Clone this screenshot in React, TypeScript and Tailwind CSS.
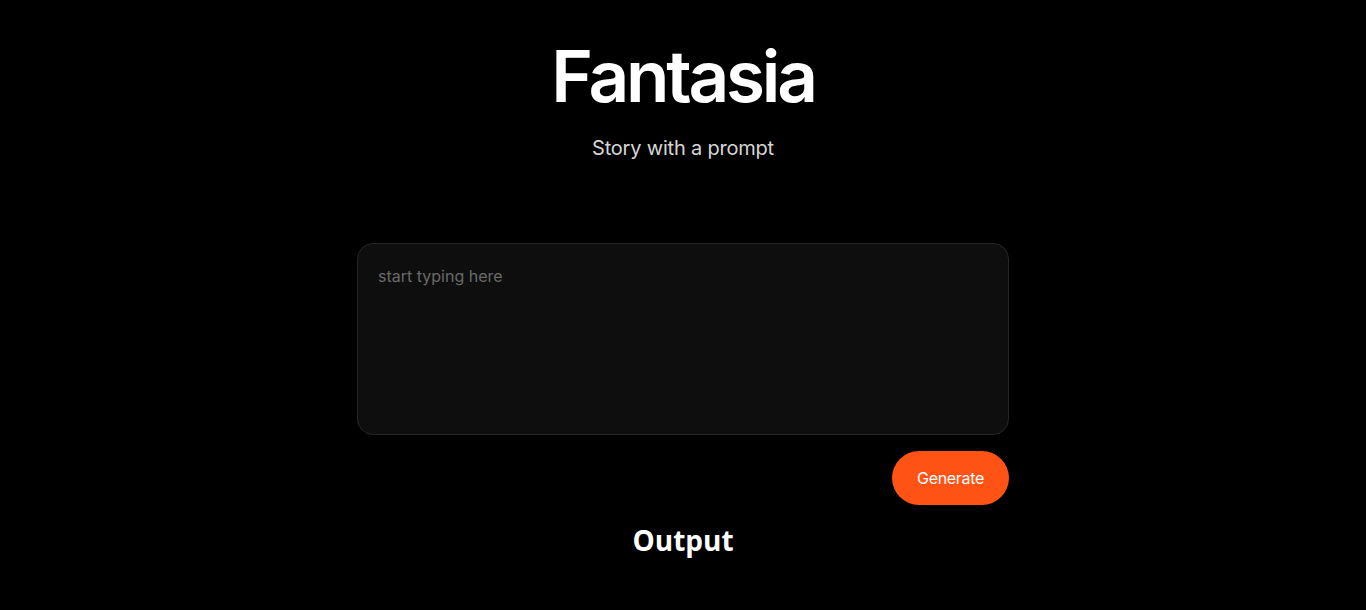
import { useState } from "react"

const App = () => {
  const [prompt, setPrompt] = useState("")

  return (
    <div className="min-h-screen w-full bg-black flex flex-col items-center font-['Inter',sans-serif]">
      {/* Header */}
      <h1 className="mt-[28px] text-[71px] leading-[96px] font-semibold tracking-[-0.045em] text-white">Fantasia</h1>
      <p className="mt-[10px] text-[20px] leading-[28px] text-[#d6d6d6] tracking-[-0.01em]">Story with a prompt</p>

      {/* Prompt */}
      <div className="mt-[81px] w-[652px] flex flex-col">
        <textarea
          value={prompt}
          onChange={e => setPrompt(e.target.value)}
          placeholder="start typing here"
          className="h-[192px] w-full resize-none rounded-2xl border border-[#262626] bg-[#0e0e0e] px-5 py-[20px] text-[16px] leading-[24px] text-white placeholder:text-[#6a6a6a] outline-none"
        />
        {/* Button */}
        <div className="mt-[16px] flex justify-end">
          <button className="h-[54px] w-[117px] rounded-full bg-[#ff5315] text-[16px] text-white tracking-[-0.02em]">Generate</button>
        </div>
      </div>

      {/* Output */}
      <h2 className="mt-[13px] text-[28px] leading-[44px] font-bold text-white font-['Open_Sans',sans-serif]">Output</h2>
    </div>
  )
}

export default App
